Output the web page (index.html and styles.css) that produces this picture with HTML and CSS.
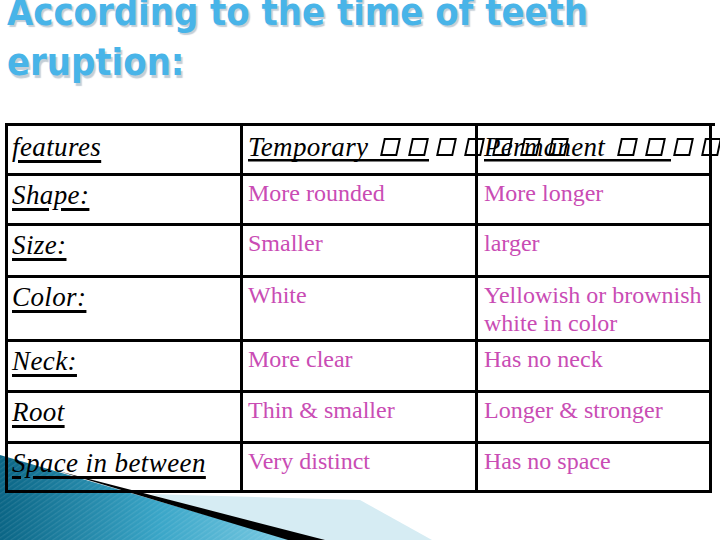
FILE: index.html
```html
<!DOCTYPE html>
<html>
<head>
<meta charset="utf-8">
<link rel="stylesheet" href="styles.css">
</head>
<body>
<svg class="deco" width="720" height="100" viewBox="0 440 720 100">
  <defs>
    <linearGradient id="bl" x1="0" y1="0" x2="1" y2="0">
      <stop offset="0" stop-color="#0a6585"/>
      <stop offset="0.55" stop-color="#3aa6c8"/>
      <stop offset="1" stop-color="#7ccbe3"/>
    </linearGradient>
    <pattern id="st" width="4" height="4" patternUnits="userSpaceOnUse" patternTransform="rotate(-35)">
      <rect width="4" height="1.3" fill="#ffffff" fill-opacity="0.09"/>
    </pattern>
  </defs>
  <polygon points="150,494 360,500 432,540 300,540" fill="#d6ecf3"/>
  <polygon points="0,455 292,540 0,540" fill="url(#bl)"/>
  <polygon points="0,455 292,540 0,540" fill="url(#st)"/>
  <polygon points="58,471 325,540 288,540" fill="#000"/>
</svg>
<h1 class="title">According to the time of teeth<br>eruption:</h1>
<div class="grid">
  <div class="cell head"><span class="lbl">features</span></div>
  <div class="cell head"><span class="hu hu-t">Temporary <i class="bx"></i><i class="bx"></i><i class="bx"></i><i class="bx"></i><i class="bx"></i><i class="bx"></i><i class="bx"></i></span></div>
  <div class="cell head"><span class="hu hu-p">Permanent <i class="bx"></i><i class="bx"></i><i class="bx"></i><i class="bx"></i></span></div>

  <div class="cell"><span class="lbl">Shape:</span></div>
  <div class="cell val">More rounded</div>
  <div class="cell val">More longer</div>

  <div class="cell"><span class="lbl">Size:</span></div>
  <div class="cell val">Smaller</div>
  <div class="cell val">larger</div>

  <div class="cell"><span class="lbl">Color:</span></div>
  <div class="cell val">White</div>
  <div class="cell val">Yellowish or brownish white in color</div>

  <div class="cell"><span class="lbl">Neck:</span></div>
  <div class="cell val">More clear</div>
  <div class="cell val">Has no neck</div>

  <div class="cell"><span class="lbl">Root</span></div>
  <div class="cell val">Thin &amp; smaller</div>
  <div class="cell val">Longer &amp; stronger</div>

  <div class="cell"><span class="lbl">Space in between</span></div>
  <div class="cell val">Very distinct</div>
  <div class="cell val">Has no space</div>
</div>
</body>
</html>
```
FILE: styles.css
```css
html, body {
  margin: 0;
  padding: 0;
}
body {
  width: 720px;
  height: 540px;
  overflow: hidden;
  background: #ffffff;
  position: relative;
}
.deco {
  position: absolute;
  left: 0;
  bottom: 0;
  display: block;
}
.title {
  margin: -9px 0 0 0;
  padding-left: 7px;
  font-family: "DejaVu Sans", sans-serif;
  font-weight: bold;
  font-size: 34px;
  line-height: 45px;
  color: #48b4e8;
  text-shadow: 2px 2px 1px rgba(40, 80, 110, 0.28);
  white-space: nowrap;
  transform: scaleY(1.12);
  transform-origin: 0 34px;
}
.grid {
  position: relative;
  margin: 42px 0 0 5px;
  width: 707px;
  display: grid;
  grid-template-columns: 235px 235px 234px;
  grid-template-rows: 50px 50px 52px 64px 51px 51px 49px;
  border-top: 3px solid #000;
  border-left: 3px solid #000;
}
.cell {
  border-right: 3px solid #000;
  border-bottom: 3px solid #000;
  padding: 3px 0 0 5px;
  white-space: nowrap;
  font-family: "Liberation Serif", serif;
  min-width: 0;
  font-size: 24px;
  line-height: 28px;
}
.cell:nth-child(3n+1) {
  padding-left: 4px;
}
.cell:nth-child(3n) {
  padding-left: 6px;
}
.head {
  padding-top: 5px;
  font-size: 27px;
  line-height: 32px;
  font-style: italic;
  color: #000;
}
.lbl {
  font-family: "Liberation Serif", serif;
  font-style: italic;
  font-size: 27px;
  line-height: 32px;
  letter-spacing: 0.4px;
  color: #000;
  text-decoration: underline;
  text-decoration-thickness: 2.5px;
  text-underline-offset: 4px;
}
.val {
  color: #c94cb4;
  white-space: normal;
  padding-right: 4px;
}
.hu {
  background-image: linear-gradient(#000, #000);
  background-repeat: no-repeat;
  background-position: 0 calc(100% - 1px);
  letter-spacing: 0.3px;
}
.hu-t {
  background-size: 181px 2.5px;
}
.hu-p {
  background-size: 187px 2.5px;
}
.bx {
  display: inline-block;
  width: 13px;
  height: 14px;
  border: 2px solid #000;
  margin: 0 4px 0 7px;
  transform: skewX(-12deg);
  vertical-align: 0;
}
```
